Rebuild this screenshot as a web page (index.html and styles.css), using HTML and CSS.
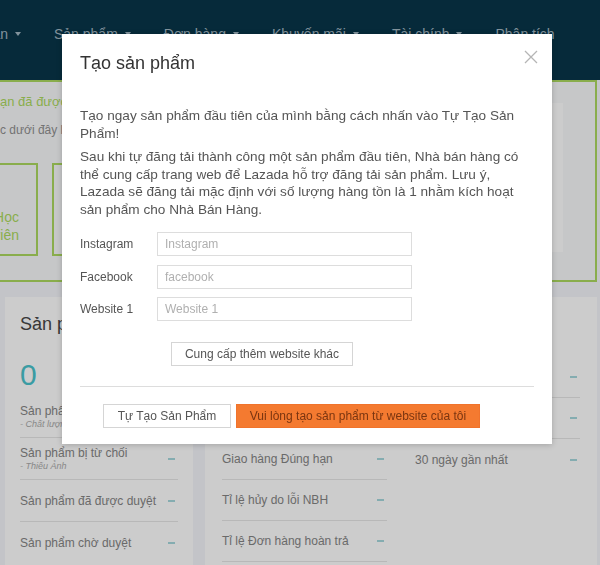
FILE: index.html
```html
<!DOCTYPE html>
<html lang="vi">
<head>
<meta charset="utf-8">
<title>Tạo sản phẩm</title>
<link rel="stylesheet" href="styles.css">
</head>
<body>
<header class="topnav">
  <nav class="nav-items">
    <span class="nav-item nav-first">Tài khoản <i class="caret"></i></span>
    <span class="nav-item">Sản phẩm <i class="caret"></i></span>
    <span class="nav-item">Đơn hàng <i class="caret"></i></span>
    <span class="nav-item">Khuyến mãi <i class="caret"></i></span>
    <span class="nav-item">Tài chính <i class="caret"></i></span>
    <span class="nav-item">Phân tích</span>
  </nav>
</header>

<main class="page">
  <section class="notice">
    <div class="notice-main">
      <p class="notice-title">ạn đã được kích hoạt thành công</p>
      <p class="notice-sub">c dưới đây là những việc cần làm tiếp theo</p>
      <div class="steps">
        <div class="step step-first">Trung tâm Học<br>viên</div>
        <div class="step step-wide"></div>
      </div>
    </div>
    <div class="notice-side"></div>
  </section>

  <section class="cards">
    <div class="card card-products">
      <h2 class="card-title">Sản phẩm</h2>
      <div class="big-num">0</div>
      <ul class="rows">
        <li class="row"><span class="row-text">Sản phẩm kém<small>- Chất lượng thấp</small></span><i class="dash"></i></li>
        <li class="row"><span class="row-text">Sản phẩm bị từ chối<small>- Thiếu Ảnh</small></span><i class="dash"></i></li>
        <li class="row"><span class="row-text">Sản phẩm đã được duyệt</span><i class="dash"></i></li>
        <li class="row"><span class="row-text">Sản phẩm chờ duyệt</span><i class="dash"></i></li>
      </ul>
    </div>
    <div class="card card-perf">
      <h2 class="card-title">Hiệu suất</h2>
      <div class="perf-cols">
        <ul class="rows rows-tight">
          <li class="row"><span class="row-text">Đánh giá tích cực</span><i class="dash"></i></li>
          <li class="row"><span class="row-text">Tỉ lệ phản hồi</span><i class="dash"></i></li>
          <li class="row"><span class="row-text">Giao hàng Đúng hạn</span><i class="dash"></i></li>
          <li class="row"><span class="row-text">Tỉ lệ hủy do lỗi NBH</span><i class="dash"></i></li>
          <li class="row row-open"><span class="row-text">Tỉ lệ Đơn hàng hoàn trả</span><i class="dash"></i></li>
        </ul>
        <ul class="rows rows-tight">
          <li class="row"><span class="row-text">Thời gian phản hồi</span><i class="dash"></i></li>
          <li class="row"><span class="row-text">Điểm đánh giá</span><i class="dash"></i></li>
          <li class="row"><span class="row-text">30 ngày gần nhất</span><i class="dash"></i></li>
        </ul>
      </div>
    </div>
  </section>
</main>

<div class="backdrop"></div>

<div class="modal" role="dialog" aria-labelledby="modal-title">
  <div class="modal-head">
    <h1 class="modal-title" id="modal-title">Tạo sản phẩm</h1>
    <svg class="modal-close" viewBox="0 0 14 14" aria-label="Đóng">
      <path d="M1 1 L13 13 M13 1 L1 13" stroke="#b5b5b5" stroke-width="1.3" fill="none"/>
    </svg>
  </div>
  <div class="modal-body">
    <p>Tạo ngay sản phẩm đầu tiên của mình bằng cách nhấn vào Tự Tạo Sản Phẩm!</p>
    <p>Sau khi tự đăng tải thành công một sản phẩm đầu tiên, Nhà bán hàng có thể cung cấp trang web để Lazada hỗ trợ đăng tải sản phẩm. Lưu ý, Lazada sẽ đăng tải mặc định với số lượng hàng tồn là 1 nhằm kích hoạt sản phẩm cho Nhà Bán Hàng.</p>
    <div class="form">
      <label class="field-label" for="f-ig">Instagram</label>
      <input class="field-input" id="f-ig" type="text" placeholder="Instagram">
      <label class="field-label" for="f-fb">Facebook</label>
      <input class="field-input" id="f-fb" type="text" placeholder="facebook">
      <label class="field-label" for="f-web">Website 1</label>
      <input class="field-input" id="f-web" type="text" placeholder="Website 1">
    </div>
    <button class="btn btn-add" type="button">Cung cấp thêm website khác</button>
  </div>
  <div class="modal-divider"></div>
  <div class="modal-foot">
    <button class="btn btn-self" type="button">Tự Tạo Sản Phẩm</button>
    <button class="btn btn-primary" type="button">Vui lòng tạo sản phẩm từ website của tôi</button>
  </div>
</div>
</body>
</html>
```

FILE: styles.css
```css
* { box-sizing: border-box; }

html, body { margin: 0; padding: 0; }

body {
  width: 600px;
  height: 565px;
  overflow: hidden;
  background: #f4f6fa;
  font-family: "Liberation Sans", Arial, sans-serif;
  color: #858585;
  position: relative;
}

/* ---------- top navigation ---------- */
.topnav {
  height: 80px;
  background: #083549;
  padding-top: 26px;
}

.nav-items {
  display: flex;
  gap: 33px;
  font-size: 14px;
  line-height: 16px;
  color: #a3b8c3;
}

.nav-item {
  display: flex;
  align-items: center;
  gap: 7px;
  white-space: nowrap;
}

.nav-first {
  width: 21px;
  overflow: hidden;
  justify-content: flex-end;
  flex-shrink: 0;
}

.caret {
  width: 0;
  height: 0;
  border-left: 3.5px solid transparent;
  border-right: 3.5px solid transparent;
  border-top: 4px solid currentColor;
}

/* ---------- notice ---------- */
.notice {
  display: flex;
  height: 202px;
  margin: 0 3px 0 -2px;
  border: 2px solid #acd95f;
  background: #f8f9fb;
}

.notice-main {
  flex: 1;
  padding-top: 12px;
  min-width: 0;
}

.notice-title {
  margin: 0;
  font-size: 13px;
  line-height: 16px;
  color: #acd95f;
  white-space: nowrap;
}

.notice-sub {
  margin: 12px 0 0;
  font-size: 12px;
  line-height: 16px;
  color: #909090;
  white-space: nowrap;
}

.steps {
  display: flex;
  gap: 14px;
  margin-top: 25px;
}

.step {
  height: 93px;
  border: 2px solid #acd95f;
}

.step-first {
  width: 98px;
  margin-left: -60px;
  padding: 43px 17px 0 0;
  text-align: right;
  font-size: 14px;
  line-height: 18px;
  color: #acd95f;
  white-space: nowrap;
  overflow: hidden;
  direction: rtl;
}

.step-wide {
  width: 200px;
}

.notice-side {
  width: 140px;
  height: 149px;
  margin: 21px 32px 0 0;
  background: #ffffff;
}

/* ---------- cards ---------- */
.cards {
  display: flex;
  gap: 12px;
  margin-top: 15px;
  padding-left: 5px;
}

.card {
  background: #ffffff;
  height: 268px;
  overflow: hidden;
}

.card-products {
  width: 188px;
  padding: 16px 15px 0;
}

.card-perf {
  width: 392px;
  padding: 16px 17px 0;
}

.card-title {
  margin: 0;
  font-size: 18px;
  line-height: 22px;
  font-weight: normal;
  color: #464646;
  white-space: nowrap;
}

.big-num {
  margin-top: 23px;
  font-size: 30px;
  line-height: 34px;
  color: #49c3cc;
}

.rows {
  list-style: none;
  margin: 4px 0 0;
  padding: 0;
}

.row {
  display: flex;
  align-items: center;
  justify-content: space-between;
  height: 42px;
  border-bottom: 1px solid #e6e6e6;
  padding-right: 3px;
}

.row:last-child { border-bottom: none; }

.row-open:last-child { border-bottom: 1px solid #e6e6e6; }

.row-text {
  display: flex;
  flex-direction: column;
  font-size: 12px;
  line-height: 14px;
  color: #858585;
  white-space: nowrap;
}

.row-text small {
  font-size: 9px;
  line-height: 12px;
  font-style: italic;
  color: #ababab;
}

.dash {
  width: 7px;
  height: 2px;
  background: #a6d8dc;
  flex-shrink: 0;
}

.perf-cols {
  display: grid;
  grid-template-columns: 165px 165px;
  column-gap: 28px;
  margin-top: 22px;
  align-items: start;
}

.rows-tight { margin-top: 0; }
.rows-tight .row { height: 41px; }

/* ---------- modal ---------- */
.backdrop {
  position: fixed;
  inset: 0;
  background: rgba(0, 0, 0, 0.2);
}

.modal {
  position: absolute;
  left: 62px;
  top: 34px;
  width: 490px;
  height: 410px;
  padding: 0 18px;
  background: #ffffff;
  box-shadow: 0 1px 6px rgba(0, 0, 0, 0.2);
  color: #555555;
}

.modal-head {
  display: flex;
  justify-content: space-between;
  align-items: flex-start;
  padding-top: 18px;
}

.modal-title {
  margin: 0;
  font-size: 18px;
  line-height: 22px;
  font-weight: normal;
  color: #333333;
}

.modal-close {
  width: 14px;
  height: 14px;
  margin: -2px -4px 0 0;
}

.modal-body {
  margin-top: 33px;
  font-size: 13.6px;
  line-height: 17.5px;
}

.modal-body p { margin: 0; }
.modal-body p + p { margin-top: 6px; }

.form {
  display: grid;
  grid-template-columns: 77px 255px;
  row-gap: 8.5px;
  margin-top: 14px;
}

.field-label {
  font-size: 12px;
  line-height: 24px;
  color: #555555;
}

.field-input {
  height: 24px;
  margin: 0;
  padding: 0 7px;
  border: 1px solid #dddddd;
  border-radius: 0;
  font-family: "Liberation Sans", Arial, sans-serif;
  font-size: 12px;
  color: #555555;
  background: #ffffff;
  outline: none;
}

.field-input::placeholder { color: #b0b0b0; }

.btn {
  height: 24px;
  margin: 0;
  padding: 0;
  border: 1px solid #d5d5d5;
  border-radius: 0;
  background: #ffffff;
  font-family: "Liberation Sans", Arial, sans-serif;
  font-size: 12px;
  color: #555555;
  cursor: pointer;
}

.btn-add {
  display: block;
  width: 182px;
  margin: 21px 0 0 91px;
}

.modal-divider {
  height: 1px;
  margin-top: 20px;
  background: #dddddd;
}

.modal-foot {
  display: flex;
  gap: 5px;
  margin-top: 17px;
  padding-left: 23px;
}

.btn-self { width: 128px; }

.btn-primary {
  width: 244px;
  border-color: #f0732c;
  background: #f47a30;
  color: #7a3510;
}
```
